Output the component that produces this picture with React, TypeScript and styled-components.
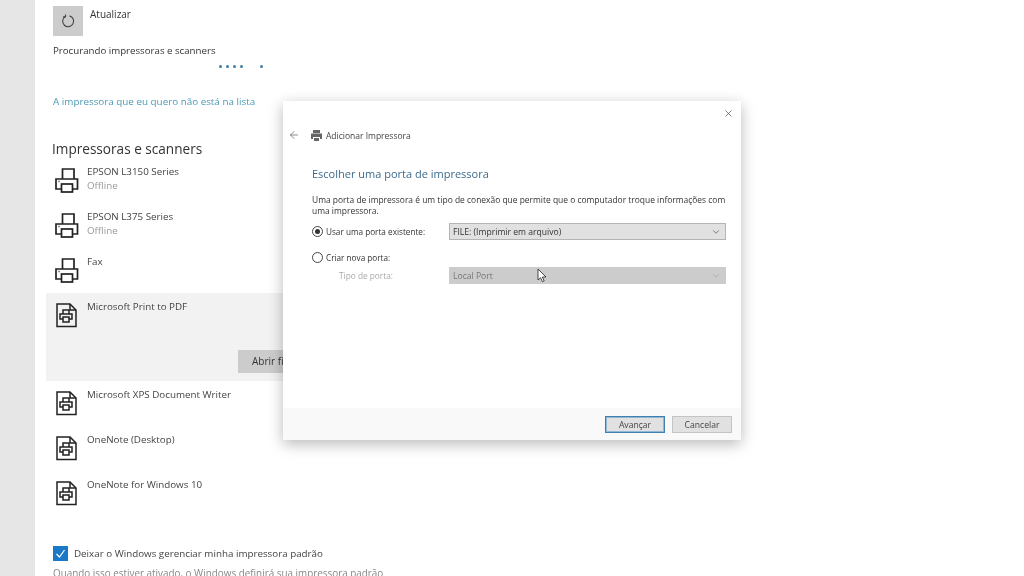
import styled, { createGlobalStyle } from "styled-components";
import { ArrowLeft, ChevronDown, X } from "lucide-react";

const GlobalStyle = createGlobalStyle`
  html, body {
    margin: 0;
    padding: 0;
    background: #fff;
  }
  body {
    font-family: "Open Sans", "Noto Sans", sans-serif;
    color: #333;
  }
`;

const Page = styled.div`
  position: relative;
  width: 1024px;
  height: 576px;
  overflow: hidden;
  display: flex;
  background: #fff;
  filter: blur(0.35px);
`;

const Sidebar = styled.div`
  width: 35px;
  flex-shrink: 0;
  background: #e6e6e6;
`;

const Content = styled.div`
  flex: 1;
  padding: 6px 0 0 11px;
  display: flex;
  flex-direction: column;
`;

const Indented = styled.div`
  padding-left: 7px;
`;

const RefreshRow = styled.div`
  display: flex;
  gap: 7px;
`;

const RefreshTile = styled.div`
  width: 30px;
  height: 30px;
  background: #cccccc;
  display: flex;
  align-items: center;
  justify-content: center;
  color: #444;
`;

const RefreshLabel = styled.div`
  font-size: 10px;
  line-height: 16px;
  color: #333;
`;

const Searching = styled.div`
  font-size: 9.7px;
  line-height: 14px;
  margin-top: 8px;
  color: #333;
`;

const Dots = styled.div`
  display: flex;
  gap: 4px;
  height: 4px;
  margin: 7px 0 0 166px;
`;

const Dot = styled.span<{ $gap?: number }>`
  width: 3px;
  height: 3px;
  margin-left: ${(p) => p.$gap ?? 0}px;
  border-radius: 50%;
  background: #3d7ea6;
`;

const HelpLink = styled.div`
  font-size: 9.85px;
  line-height: 14px;
  margin-top: 25px;
  color: #4b9ab5;
`;

const Heading = styled.div`
  font-size: 13.6px;
  line-height: 20px;
  margin: 31px 0 0 -1px;
  color: #333;
`;

const DeviceList = styled.div`
  display: flex;
  flex-direction: column;
  margin-top: -1px;
`;

const Device = styled.div<{ $selected?: boolean }>`
  height: ${(p) => (p.$selected ? 88 : 45)}px;
  width: 400px;
  box-sizing: border-box;
  padding: 10px 0 0 9px;
  display: flex;
  gap: 8px;
  position: relative;
  background: ${(p) => (p.$selected ? "#f2f2f2" : "transparent")};
`;

const DeviceIcon = styled.svg`
  width: 24px;
  height: 26px;
  flex-shrink: 0;
  color: #222;
`;

const DeviceText = styled.div`
  display: flex;
  flex-direction: column;
  margin-top: -3px;
`;

const DeviceName = styled.div`
  font-size: 9.8px;
  line-height: 14px;
  color: #444;
`;

const DeviceStatus = styled.div`
  font-size: 9.8px;
  line-height: 14px;
  color: #999;
`;

const OpenButton = styled.div`
  position: absolute;
  left: 192px;
  top: 57px;
  width: 80px;
  height: 23px;
  padding-left: 14px;
  background: #cccccc;
  font-size: 10px;
  line-height: 23px;
  color: #333;
`;

const DefaultRow = styled.div`
  display: flex;
  align-items: center;
  gap: 6px;
  margin-top: 30px;
`;

const Checkbox = styled.div`
  width: 15px;
  height: 15px;
  background: #1a78c8;
  display: flex;
  align-items: center;
  justify-content: center;
`;

const DefaultLabel = styled.div`
  font-size: 9.8px;
  line-height: 15px;
  color: #444;
`;

const DefaultHint = styled.div`
  font-size: 9.9px;
  line-height: 14px;
  margin-top: 5px;
  color: #888;
  white-space: nowrap;
`;

const Dialog = styled.div`
  position: absolute;
  left: 283px;
  top: 101px;
  width: 458px;
  height: 339px;
  background: #fff;
  box-shadow: 0 4px 14px rgba(0, 0, 0, 0.28);
  display: flex;
  flex-direction: column;
`;

const CloseRow = styled.div`
  display: flex;
  justify-content: flex-end;
  padding: 7px 7px 0 0;
  height: 19px;
  color: #444;
`;

const DialogBar = styled.div`
  display: flex;
  align-items: center;
  height: 16px;
  padding-left: 5px;
  color: #666;
`;

const DialogPrinter = styled.svg`
  width: 13px;
  height: 13px;
  margin-left: 10px;
  margin-right: 3px;
  color: #666;
`;

const DialogName = styled.div`
  font-size: 8.5px;
  color: #444;
`;

const DialogBody = styled.div`
  flex: 1;
  padding: 23px 15px 0 29px;
`;

const DialogTitle = styled.div`
  font-size: 11px;
  line-height: 16px;
  color: #3c6a8c;
`;

const DialogText = styled.div`
  font-size: 8.45px;
  line-height: 11px;
  margin-top: 12px;
  color: #333;
`;

const PortGrid = styled.div`
  display: grid;
  grid-template-columns: 137px 1fr;
  grid-template-rows: 17px 27px 17px;
  align-items: center;
  margin-top: 7px;
`;

const RadioLabel = styled.div<{ $low?: boolean }>`
  display: flex;
  align-items: center;
  gap: 3px;
  font-size: 8.2px;
  color: #333;
  ${(p) => p.$low && "align-self: end; margin-bottom: 4px;"}
`;

const Radio = styled.span<{ $on?: boolean }>`
  width: 9px;
  height: 9px;
  border: 1px solid #444;
  border-radius: 50%;
  display: flex;
  align-items: center;
  justify-content: center;
  &::after {
    content: "";
    width: 5px;
    height: 5px;
    border-radius: 50%;
    background: ${(p) => (p.$on ? "#333" : "transparent")};
  }
`;

const PortLabel = styled.div`
  font-size: 8.3px;
  padding-left: 27px;
  color: #aaa;
`;

const Select = styled.div<{ $disabled?: boolean }>`
  height: 17px;
  box-sizing: border-box;
  padding: 0 4px 0 3px;
  display: flex;
  align-items: center;
  justify-content: space-between;
  font-size: 8.6px;
  background: ${(p) => (p.$disabled ? "#cccccc" : "#e1e1e1")};
  border: 1px solid ${(p) => (p.$disabled ? "#cccccc" : "#b4b4b4")};
  color: ${(p) => (p.$disabled ? "#777" : "#333")};
`;

const Footer = styled.div`
  height: 32px;
  display: flex;
  justify-content: flex-end;
  gap: 7px;
  padding: 8px 9px 7px 0;
  box-sizing: border-box;
  background: #f9f9f9;
`;

const DialogButton = styled.div<{ $primary?: boolean }>`
  width: 60px;
  height: 17px;
  box-sizing: border-box;
  display: flex;
  align-items: center;
  justify-content: center;
  font-size: 8.6px;
  color: #444;
  background: #e1e1e1;
  border: 1px solid ${(p) => (p.$primary ? "#3f80b0" : "#c4c4c4")};
  box-shadow: ${(p) => (p.$primary ? "inset 0 0 0 1px #8fb8d6" : "none")};
`;

const Cursor = styled.svg`
  position: absolute;
  left: 254px;
  top: 167px;
  width: 10px;
  height: 15px;
`;

const Printer = () => (
  <DeviceIcon viewBox="0 0 24 26" fill="none" stroke="currentColor" strokeWidth="1.7">
    <path d="M7.5 11V1H19v10" />
    <path d="M6 21H1V11h21.5v10h-5" />
    <rect x="6.5" y="16" width="11" height="8" />
    <path d="M3.5 13.5h1" />
  </DeviceIcon>
);

const DocPrinter = () => (
  <DeviceIcon viewBox="0 0 24 26" fill="none" stroke="currentColor" strokeWidth="1.5">
    <path d="M2 1h13l6 6v16.5H2z" />
    <path d="M15 1v6h6" />
    <path d="M8 11V7h6v4" />
    <path d="M8 16H5v-5h12v5h-3" />
    <rect x="8" y="14" width="6" height="5" />
  </DeviceIcon>
);

const devicesTop = [
  { name: "EPSON L3150 Series", status: "Offline" },
  { name: "EPSON L375 Series", status: "Offline" },
  { name: "Fax" },
];

const devicesBottom = ["Microsoft XPS Document Writer", "OneNote (Desktop)", "OneNote for Windows 10"];

export default function App() {
  return (
    <Page>
      <GlobalStyle />
      <Sidebar />
      <Content>
        <Indented>
          <RefreshRow>
            <RefreshTile>
              <svg width="14" height="14" viewBox="0 0 14 14" fill="none" stroke="currentColor" strokeWidth="1.1">
                <path d="M4.2 2.6A5.5 5.5 0 1 0 8.5 1.9" />
                <path d="M4.5 0.5v2.4H2" />
              </svg>
            </RefreshTile>
            <RefreshLabel>Atualizar</RefreshLabel>
          </RefreshRow>
          <Searching>Procurando impressoras e scanners</Searching>
          <Dots>
            <Dot />
            <Dot />
            <Dot />
            <Dot />
            <Dot $gap={13} />
          </Dots>
          <HelpLink>A impressora que eu quero não está na lista</HelpLink>
          <Heading>Impressoras e scanners</Heading>
        </Indented>
        <DeviceList>
          {devicesTop.map((d) => (
            <Device key={d.name}>
              <Printer />
              <DeviceText>
                <DeviceName>{d.name}</DeviceName>
                {d.status && <DeviceStatus>{d.status}</DeviceStatus>}
              </DeviceText>
            </Device>
          ))}
          <Device $selected>
            <DocPrinter />
            <DeviceText>
              <DeviceName>Microsoft Print to PDF</DeviceName>
            </DeviceText>
            <OpenButton>Abrir fila</OpenButton>
          </Device>
          {devicesBottom.map((name) => (
            <Device key={name}>
              <DocPrinter />
              <DeviceText>
                <DeviceName>{name}</DeviceName>
              </DeviceText>
            </Device>
          ))}
        </DeviceList>
        <Indented>
          <DefaultRow>
            <Checkbox>
              <svg width="11" height="11" viewBox="0 0 11 11" fill="none" stroke="#fff" strokeWidth="1.2">
                <path d="M1.5 6l3 3 5-7" />
              </svg>
            </Checkbox>
            <DefaultLabel>Deixar o Windows gerenciar minha impressora padrão</DefaultLabel>
          </DefaultRow>
          <DefaultHint>Quando isso estiver ativado, o Windows definirá sua impressora padrão</DefaultHint>
        </Indented>
      </Content>
      <Dialog>
        <CloseRow>
          <X size={11} strokeWidth={1.5} />
        </CloseRow>
        <DialogBar>
          <ArrowLeft size={12} strokeWidth={1.5} />
          <DialogPrinter viewBox="0 0 13 13" fill="currentColor">
            <path d="M3 1h7v3H3z" />
            <path d="M1 4.5h11V10h-2V8H3v2H1z" />
            <path d="M4 9h5v3H4z" />
          </DialogPrinter>
          <DialogName>Adicionar Impressora</DialogName>
        </DialogBar>
        <DialogBody>
          <DialogTitle>Escolher uma porta de impressora</DialogTitle>
          <DialogText>
            Uma porta de impressora é um tipo de conexão que permite que o computador troque informações com uma
            impressora.
          </DialogText>
          <PortGrid>
            <RadioLabel>
              <Radio $on />
              Usar uma porta existente:
            </RadioLabel>
            <Select>
              FILE: (Imprimir em arquivo)
              <ChevronDown size={10} color="#666" />
            </Select>
            <RadioLabel $low>
              <Radio />
              Criar nova porta:
            </RadioLabel>
            <div />
            <PortLabel>Tipo de porta:</PortLabel>
            <Select $disabled>
              Local Port
              <ChevronDown size={10} color="#aaa" />
            </Select>
          </PortGrid>
        </DialogBody>
        <Footer>
          <DialogButton $primary>Avançar</DialogButton>
          <DialogButton>Cancelar</DialogButton>
        </Footer>
        <Cursor viewBox="0 0 10 15" fill="#fff" stroke="#222" strokeWidth="0.8">
          <path d="M1 1v11l2.6-2.3 1.8 4 1.8-.8-1.8-3.9H9z" />
        </Cursor>
      </Dialog>
    </Page>
  );
}
